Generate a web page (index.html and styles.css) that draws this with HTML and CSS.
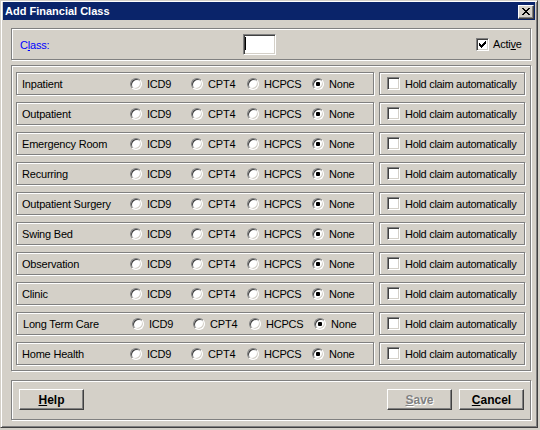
FILE: index.html
```html
<!DOCTYPE html>
<html>
<head>
<meta charset="utf-8">
<title>Add Financial Class</title>
<link rel="stylesheet" href="styles.css">
</head>
<body>
<div class="window">
  <div class="titlebar">
    <span class="title">Add Financial Class</span>
    <span class="close">
      <svg width="8" height="7" viewBox="0 0 8 7" shape-rendering="crispEdges">
        <rect x="0" y="0" width="2" height="1"/><rect x="6" y="0" width="2" height="1"/>
        <rect x="1" y="1" width="2" height="1"/><rect x="5" y="1" width="2" height="1"/>
        <rect x="2" y="2" width="4" height="1"/>
        <rect x="3" y="3" width="2" height="1"/>
        <rect x="2" y="4" width="4" height="1"/>
        <rect x="1" y="5" width="2" height="1"/><rect x="5" y="5" width="2" height="1"/>
        <rect x="0" y="6" width="2" height="1"/><rect x="6" y="6" width="2" height="1"/>
      </svg>
    </span>
  </div>
  <div class="content">
    <div class="panel panel-class">
      <span class="class-label">C<u>l</u>ass:</span>
      <span class="textbox"><span class="caret"></span></span>
      <span class="active">
        <span class="checkbox checked">
          <svg width="7" height="7" viewBox="0 0 7 7" shape-rendering="crispEdges">
            <rect x="6" y="0" width="1" height="1"/>
            <rect x="5" y="1" width="2" height="1"/>
            <rect x="0" y="2" width="1" height="1"/><rect x="4" y="2" width="3" height="1"/>
            <rect x="0" y="3" width="2" height="1"/><rect x="3" y="3" width="3" height="1"/>
            <rect x="0" y="4" width="5" height="1"/>
            <rect x="1" y="5" width="3" height="1"/>
            <rect x="2" y="6" width="1" height="1"/>
          </svg>
        </span>
        <span class="active-text">Acti<u>v</u>e</span>
      </span>
    </div>

    <div class="panel panel-rows">
      <div class="row">
        <div class="cell cell-left">
          <span class="row-label">Inpatient</span>
          <span class="opt opt-icd"><span class="radio"></span>ICD9</span>
          <span class="opt opt-cpt"><span class="radio"></span>CPT4</span>
          <span class="opt opt-hcp"><span class="radio"></span>HCPCS</span>
          <span class="opt"><span class="radio on"></span>None</span>
        </div>
        <div class="cell cell-right"><span class="checkbox"></span><span class="hold">Hold claim automatically</span></div>
      </div>
      <div class="row">
        <div class="cell cell-left">
          <span class="row-label">Outpatient</span>
          <span class="opt opt-icd"><span class="radio"></span>ICD9</span>
          <span class="opt opt-cpt"><span class="radio"></span>CPT4</span>
          <span class="opt opt-hcp"><span class="radio"></span>HCPCS</span>
          <span class="opt"><span class="radio on"></span>None</span>
        </div>
        <div class="cell cell-right"><span class="checkbox"></span><span class="hold">Hold claim automatically</span></div>
      </div>
      <div class="row">
        <div class="cell cell-left">
          <span class="row-label">Emergency Room</span>
          <span class="opt opt-icd"><span class="radio"></span>ICD9</span>
          <span class="opt opt-cpt"><span class="radio"></span>CPT4</span>
          <span class="opt opt-hcp"><span class="radio"></span>HCPCS</span>
          <span class="opt"><span class="radio on"></span>None</span>
        </div>
        <div class="cell cell-right"><span class="checkbox"></span><span class="hold">Hold claim automatically</span></div>
      </div>
      <div class="row">
        <div class="cell cell-left">
          <span class="row-label">Recurring</span>
          <span class="opt opt-icd"><span class="radio"></span>ICD9</span>
          <span class="opt opt-cpt"><span class="radio"></span>CPT4</span>
          <span class="opt opt-hcp"><span class="radio"></span>HCPCS</span>
          <span class="opt"><span class="radio on"></span>None</span>
        </div>
        <div class="cell cell-right"><span class="checkbox"></span><span class="hold">Hold claim automatically</span></div>
      </div>
      <div class="row">
        <div class="cell cell-left">
          <span class="row-label">Outpatient Surgery</span>
          <span class="opt opt-icd"><span class="radio"></span>ICD9</span>
          <span class="opt opt-cpt"><span class="radio"></span>CPT4</span>
          <span class="opt opt-hcp"><span class="radio"></span>HCPCS</span>
          <span class="opt"><span class="radio on"></span>None</span>
        </div>
        <div class="cell cell-right"><span class="checkbox"></span><span class="hold">Hold claim automatically</span></div>
      </div>
      <div class="row">
        <div class="cell cell-left">
          <span class="row-label">Swing Bed</span>
          <span class="opt opt-icd"><span class="radio"></span>ICD9</span>
          <span class="opt opt-cpt"><span class="radio"></span>CPT4</span>
          <span class="opt opt-hcp"><span class="radio"></span>HCPCS</span>
          <span class="opt"><span class="radio on"></span>None</span>
        </div>
        <div class="cell cell-right"><span class="checkbox"></span><span class="hold">Hold claim automatically</span></div>
      </div>
      <div class="row">
        <div class="cell cell-left">
          <span class="row-label">Observation</span>
          <span class="opt opt-icd"><span class="radio"></span>ICD9</span>
          <span class="opt opt-cpt"><span class="radio"></span>CPT4</span>
          <span class="opt opt-hcp"><span class="radio"></span>HCPCS</span>
          <span class="opt"><span class="radio on"></span>None</span>
        </div>
        <div class="cell cell-right"><span class="checkbox"></span><span class="hold">Hold claim automatically</span></div>
      </div>
      <div class="row">
        <div class="cell cell-left">
          <span class="row-label">Clinic</span>
          <span class="opt opt-icd"><span class="radio"></span>ICD9</span>
          <span class="opt opt-cpt"><span class="radio"></span>CPT4</span>
          <span class="opt opt-hcp"><span class="radio"></span>HCPCS</span>
          <span class="opt"><span class="radio on"></span>None</span>
        </div>
        <div class="cell cell-right"><span class="checkbox"></span><span class="hold">Hold claim automatically</span></div>
      </div>
      <div class="row">
        <div class="cell cell-left nudge">
          <span class="row-label">Long Term Care</span>
          <span class="opt opt-icd"><span class="radio"></span>ICD9</span>
          <span class="opt opt-cpt"><span class="radio"></span>CPT4</span>
          <span class="opt opt-hcp"><span class="radio"></span>HCPCS</span>
          <span class="opt"><span class="radio on"></span>None</span>
        </div>
        <div class="cell cell-right"><span class="checkbox"></span><span class="hold">Hold claim automatically</span></div>
      </div>
      <div class="row">
        <div class="cell cell-left">
          <span class="row-label">Home Health</span>
          <span class="opt opt-icd"><span class="radio"></span>ICD9</span>
          <span class="opt opt-cpt"><span class="radio"></span>CPT4</span>
          <span class="opt opt-hcp"><span class="radio"></span>HCPCS</span>
          <span class="opt"><span class="radio on"></span>None</span>
        </div>
        <div class="cell cell-right"><span class="checkbox"></span><span class="hold">Hold claim automatically</span></div>
      </div>
    </div>

    <div class="panel panel-buttons">
      <button class="btn"><u>H</u>elp</button>
      <div class="btn-group">
        <button class="btn disabled"><u>S</u>ave</button>
        <button class="btn"><u>C</u>ancel</button>
      </div>
    </div>
  </div>
</div>
</body>
</html>
```
FILE: styles.css
```css
html, body {
  margin: 0;
  padding: 0;
  background: #d4d0c8;
}

body {
  font-family: "Liberation Sans", Arial, sans-serif;
  font-size: 11px;
  color: #000;
}

u {
  text-decoration-thickness: 1px;
  text-underline-offset: 1px;
}

.window {
  width: 538px;
  height: 428px;
  box-sizing: border-box;
  background: #d4d0c8;
  border: 1px solid;
  border-color: #d4d0c8 #404040 #404040 #d4d0c8;
  box-shadow: inset 1px 1px 0 #fff, inset -1px -1px 0 #808080;
  padding: 1px 2px 2px 2px;
}

.titlebar {
  height: 18px;
  background: #0a246a;
  display: flex;
  align-items: flex-start;
  justify-content: space-between;
}

.title {
  color: #fff;
  font-weight: bold;
  font-size: 11px;
  line-height: 18px;
  padding-left: 2px;
}

.close {
  width: 16px;
  height: 14px;
  box-sizing: border-box;
  margin-top: 3px;
  margin-right: 1px;
  background: #d4d0c8;
  border: 1px solid;
  border-color: #fff #404040 #404040 #fff;
  box-shadow: inset -1px -1px 0 #808080;
  display: flex;
  align-items: center;
  justify-content: center;
  padding-bottom: 1px;
}

.close svg {
  display: block;
  fill: #000;
}

.content {
  padding: 8px 0 0 8px;
}

.panel {
  box-sizing: border-box;
  width: 520px;
  border: 1px solid #808080;
  box-shadow: inset 1px 1px 0 #fff, 1px 1px 0 #fff;
}

/* Class panel */
.panel-class {
  height: 32px;
  display: flex;
  align-items: center;
  padding-left: 8px;
  letter-spacing: -0.2px;
}

.class-label {
  width: 223px;
  color: #0000ff;
  padding-top: 1px;
}

.textbox {
  width: 33px;
  height: 21px;
  box-sizing: border-box;
  background: #fff;
  border: 1px solid;
  border-color: #808080 #fff #fff #808080;
  box-shadow: inset 1px 1px 0 #404040, inset -1px -1px 0 #d4d0c8;
  padding: 2px 0 0 1px;
  margin-top: 1px;
}

.caret {
  display: block;
  width: 1px;
  height: 13px;
  background: #000;
}

.active {
  display: flex;
  align-items: center;
  margin-left: 200px;
}

.active-text {
  margin-left: 4px;
}

.checkbox {
  width: 13px;
  height: 13px;
  box-sizing: border-box;
  flex: none;
  background: #fff;
  border: 1px solid;
  border-color: #808080 #fff #fff #808080;
  box-shadow: inset 1px 1px 0 #404040, inset -1px -1px 0 #d4d0c8;
  padding: 2px;
}

.checkbox svg {
  display: block;
  fill: #000;
}

/* Rows panel */
.panel-rows {
  margin-top: 5px;
  height: 306px;
  padding: 6px 0 0 4px;
  display: flex;
  flex-direction: column;
  gap: 7px;
  letter-spacing: -0.2px;
}

.row {
  display: flex;
}

.cell {
  box-sizing: border-box;
  height: 23px;
  border: 1px solid #808080;
  box-shadow: inset 1px 1px 0 #fff, 1px 1px 0 #fff;
  display: flex;
  align-items: center;
}

.cell-left {
  width: 358px;
  padding-left: 5px;
}

.cell-left.nudge {
  padding-left: 6px;
}

.row-label {
  width: 108px;
  flex: none;
  padding-top: 1px;
}

.nudge .row-label {
  width: 109px;
}

.opt {
  display: flex;
  align-items: center;
  flex: none;
  padding-top: 1px;
}

.opt-icd { width: 61px; }
.opt-cpt { width: 56px; }
.opt-hcp { width: 65px; }

.radio {
  width: 12px;
  height: 12px;
  box-sizing: border-box;
  flex: none;
  border-radius: 50%;
  background: #fff;
  border: 1px solid;
  border-color: #808080 #fff #fff #808080;
  box-shadow: inset 1px 1px 0 #404040, inset -1px -1px 0 #d4d0c8;
  margin-right: 5px;
  display: flex;
  align-items: center;
  justify-content: center;
}

.radio.on::after {
  content: "";
  width: 4px;
  height: 4px;
  border-radius: 1px;
  background: #000;
}

.cell-right {
  width: 146px;
  margin-left: 5px;
  padding-left: 7px;
}

.hold {
  margin-left: 5px;
  letter-spacing: -0.3px;
}

/* Buttons panel */
.panel-buttons {
  margin-top: 9px;
  height: 40px;
  display: flex;
  align-items: flex-start;
  justify-content: space-between;
  padding: 8px 6px 0 7px;
}

.btn-group {
  display: flex;
  gap: 7px;
}

.btn {
  width: 65px;
  height: 21px;
  box-sizing: border-box;
  margin: 0;
  padding: 0;
  background: #d4d0c8;
  border: 1px solid;
  border-color: #fff #404040 #404040 #fff;
  box-shadow: inset -1px -1px 0 #808080;
  font-family: "Liberation Sans", Arial, sans-serif;
  font-weight: bold;
  font-size: 12px;
  color: #000;
}

.btn.disabled {
  color: #808080;
  text-shadow: 1px 1px 0 #fff;
}
```
